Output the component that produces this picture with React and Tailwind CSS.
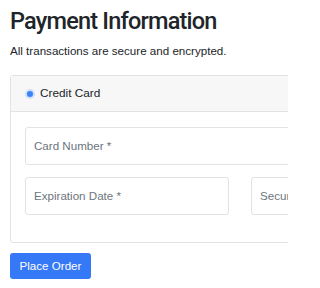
export default function App() {
  return (
    <div className="w-[288px] h-[288px] overflow-hidden bg-white font-['Liberation_Sans',Arial,sans-serif] text-[#212529]">
      <div className="w-[470px] pl-[10px] pt-[6px]">
        <h1 className="font-['Roboto','Liberation_Sans',sans-serif] text-[23.5px] leading-[30px] font-medium tracking-[-0.8px]">
          Payment Information
        </h1>
        <p className="mt-[7px] text-[11.6px] leading-[15px]">All transactions are secure and encrypted.</p>

        {/* Card */}
        <div className="mt-[17px] border border-[#e3e3e3] rounded-[3px]">
          <div className="h-[36px] flex items-center gap-[5px] pl-[14px] bg-[#f7f7f7] border-b border-[#e3e3e3]">
            <span className="w-[10px] h-[10px] rounded-full bg-[#3b82f6] border-[2.5px] border-[#cfe0fb] box-border" />
            <span className="text-[11.8px]">Credit Card</span>
          </div>
          <div className="px-[14px] pt-[15px] pb-[27px] flex flex-col gap-[12px]">
            <div className="h-[38px] border border-[#e3e3e3] rounded-[3px] flex items-center px-[8px] text-[11.6px] text-[#6c757d]">
              Card Number *
            </div>
            <div className="grid grid-cols-2 gap-[22px]">
              <div className="h-[38px] border border-[#e3e3e3] rounded-[3px] flex items-center px-[8px] text-[11.6px] text-[#6c757d]">
                Expiration Date *
              </div>
              <div className="h-[38px] border border-[#e3e3e3] rounded-[3px] flex items-center px-[8px] text-[11.6px] text-[#6c757d]">
                Security Code *
              </div>
            </div>
          </div>
        </div>

        <button className="mt-[10px] h-[26px] w-[81px] rounded-[3px] bg-[#3579f6] text-white text-[11.6px]">
          Place Order
        </button>
      </div>
    </div>
  )
}
